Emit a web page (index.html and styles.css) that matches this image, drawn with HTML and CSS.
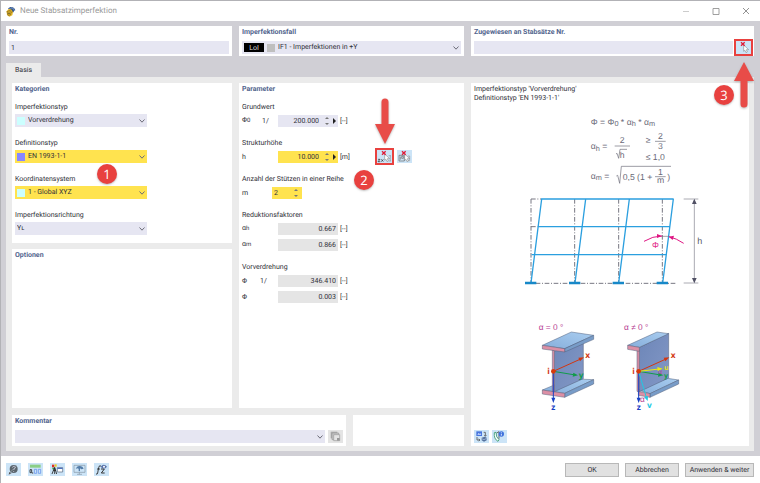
FILE: index.html
```html
<!DOCTYPE html>
<html lang="de">
<head>
<meta charset="utf-8">
<title>Neue Stabsatzimperfektion</title>
<link rel="stylesheet" href="styles.css">
</head>
<body>
<svg class="defs" aria-hidden="true">
  <defs>
    <symbol id="chevron" viewBox="0 0 8 8"><path d="M1.5 2.5 4 5.2 6.5 2.5" fill="none" stroke="#6c6c78" stroke-width="1"/></symbol>
    <symbol id="pick" viewBox="0 0 45 39">
      <path d="M23 12v19l4-3 3 7 4-2-3-7h7z" fill="#fff" stroke="#777" stroke-width="1.5"/>
      <path d="M15 4l11 10M26 4l-11 10" stroke="#e01a36" stroke-width="4"/>
    </symbol>
    <linearGradient id="web" x1="0" y1="0" x2="1" y2="1"><stop offset="0" stop-color="#6d86b8"/><stop offset="1" stop-color="#8398c6"/></linearGradient>
    <linearGradient id="top" x1="0" y1="1" x2="1" y2="0"><stop offset="0" stop-color="#86aedb"/><stop offset="1" stop-color="#a9cdf0"/></linearGradient>
  </defs>
</svg>
<div class="window">
  <header class="titlebar">
    <svg class="app-icon" viewBox="0 0 30 33" aria-hidden="true">
      <path d="M6 8C12 0 25 2 28 13l-5 2 1 4-6-1-4-7z" fill="#35568c"/>
      <path d="M9 6l8 2M15 4l8 6M21 6l5 9" stroke="#8fb0d8" stroke-width="1.5"/>
      <path d="M2 16l6-7 7 1 6 8-2 10-9 4-7-5z" fill="#e3b526"/>
      <path d="M3 17l7-3 5 5-2 8-7 1zM10 14l6-3M15 19l5-2" fill="none" stroke="#7b6220" stroke-width="1.8"/>
      <circle cx="9" cy="22" r="2.4" fill="#55502f"/>
    </svg>
    <h1>Neue Stabsatzimperfektion</h1>
    <div class="window-controls">
      <button type="button" aria-label="Minimieren"><svg viewBox="0 0 8 8"><path d="M1 4.5h6" stroke="#ccc"/></svg></button>
      <button type="button" aria-label="Maximieren"><svg viewBox="0 0 8 8"><path d="M1 1.5h6v6H1z" fill="none" stroke="#888" stroke-width=".8"/></svg></button>
      <button type="button" aria-label="Schließen"><svg viewBox="0 0 8 8"><path d="M1 1l6 6M7 1l-6 6" stroke="#777" stroke-width=".8"/></svg></button>
    </div>
  </header>

  <main class="content">
    <div class="head-row">
      <section class="panel">
        <h2><label for="nr">Nr.</label></h2>
        <div class="line"><input class="field grow" id="nr" value="1"></div>
      </section>
      <section class="panel">
        <h2><label for="case">Imperfektionsfall</label></h2>
        <div class="line">
          <div class="combo grow"><span class="tag">LoI</span><i class="swatch grey"></i><select id="case"><option>IF1 - Imperfektionen in +Y</option></select><svg class="chev"><use href="#chevron"/></svg></div>
        </div>
      </section>
      <section class="panel assigned">
        <h2><label for="sets">Zugewiesen an Stabsätze Nr.</label></h2>
        <div class="line">
          <input class="field grow" id="sets">
          <button class="tool marked" type="button" aria-label="Stabsätze wählen"><svg viewBox="0 0 45 39"><use href="#pick" width="45" height="39"/></svg></button>
        </div>
        <svg class="arrow up" viewBox="0 0 20 46" aria-hidden="true"><path d="M10 0 20 19h-6.500v23a3.500 3.500 0 0 1-7 0V19H0z"/></svg>
        <span class="badge three">3</span>
      </section>
    </div>

    <nav class="tabs"><button type="button" class="tab">Basis</button></nav>
    <div class="sheet">
      <div class="left">
        <div class="upper">
          <div class="stack">
            <section class="panel">
              <h2>Kategorien</h2>
              <div class="groups">
                <div class="group"><label for="typ">Imperfektionstyp</label>
                  <div class="combo"><i class="swatch cyan"></i><select id="typ"><option>Vorverdrehung</option></select><svg class="chev"><use href="#chevron"/></svg></div></div>
                <div class="group"><label for="def">Definitionstyp</label>
                  <div class="combo hot"><i class="swatch violet"></i><select id="def"><option>EN 1993-1-1</option></select><svg class="chev"><use href="#chevron"/></svg></div></div>
                <div class="group"><label for="cs">Koordinatensystem</label>
                  <div class="combo hot"><i class="swatch cyan"></i><select id="cs"><option>1 - Global XYZ</option></select><svg class="chev"><use href="#chevron"/></svg></div>
                  <span class="badge one">1</span></div>
                <div class="group"><label for="dir">Imperfektionsrichtung</label>
                  <div class="combo"><select id="dir"><option>Yʟ</option></select><svg class="chev"><use href="#chevron"/></svg></div></div>
              </div>
            </section>
            <section class="panel fill"><h2>Optionen</h2></section>
          </div>

          <section class="panel">
            <h2>Parameter</h2>
            <div class="groups">
              <div class="group"><h3>Grundwert</h3>
                <div class="param"><label for="phi0">Φ<small>0</small></label><span>1/</span>
                  <div class="number"><input id="phi0" value="200.000"><span class="spin"><button type="button" aria-label="Mehr"></button><button type="button" aria-label="Weniger"></button></span><button class="play" type="button" aria-label="Optionen"></button></div>
                  <span>[--]</span></div></div>
              <div class="group"><h3>Strukturhöhe</h3>
                <div class="param"><label for="h">h</label><span></span>
                  <div class="number hot"><input id="h" value="10.000"><span class="spin"><button type="button" aria-label="Mehr"></button><button type="button" aria-label="Weniger"></button></span><button class="play" type="button" aria-label="Optionen"></button></div>
                  <span>[m]</span>
                  <div class="tools">
                    <button class="tool marked" type="button" aria-label="Zwei Punkte wählen"><svg viewBox="0 0 45 39"><path d="M40 17v16M35 17h7M35 33h7" stroke="#8c98a4" stroke-width="2"/><path d="M3 28h6l-6 7h7M13 28l6 7M19 28l-6 7" fill="none" stroke="#222" stroke-width="2"/><use href="#pick" width="45" height="39"/></svg></button>
                    <button class="tool" type="button" aria-label="Objekt wählen"><svg viewBox="0 0 45 39"><path d="M6 16h16v17H6zM10 20v9M14 19h5v6h-5z" fill="none" stroke="#666" stroke-width="2"/><path d="M33 18h5v14h-5" fill="none" stroke="#999" stroke-width="2"/><use href="#pick" width="45" height="39"/></svg></button>
                  </div></div>
                <svg class="arrow down" viewBox="0 0 20 46" aria-hidden="true"><path d="M10 46 0 26h6.500V4a3.500 3.500 0 0 1 7 0v22H20z"/></svg></div>
              <div class="group"><h3>Anzahl der Stützen in einer Reihe</h3>
                <div class="param count"><label for="m">m</label>
                  <div class="number hot"><input id="m" value="2"><span class="spin"><button type="button" aria-label="Mehr"></button><button type="button" aria-label="Weniger"></button></span></div></div>
                <span class="badge two">2</span></div>
              <div class="group"><h3>Reduktionsfaktoren</h3>
                <div class="param"><label for="ah">α<small>h</small></label><span></span><input class="result" id="ah" value="0.667" readonly><span>[--]</span></div>
                <div class="param"><label for="am">α<small>m</small></label><span></span><input class="result" id="am" value="0.866" readonly><span>[--]</span></div></div>
              <div class="group"><h3>Vorverdrehung</h3>
                <div class="param"><label for="p1">Φ</label><span class="near">1/</span><input class="result" id="p1" value="346.410" readonly><span>[--]</span></div>
                <div class="param"><label for="p2">Φ</label><span></span><input class="result" id="p2" value="0.003" readonly><span>[--]</span></div></div>
            </div>
          </section>
        </div>

        <div class="lower">
          <section class="panel">
            <h2><label for="note">Kommentar</label></h2>
            <div class="line">
              <div class="combo grow"><select id="note"><option></option></select><svg class="chev"><use href="#chevron"/></svg></div>
              <button class="tool off" type="button" aria-label="Kommentare"><svg viewBox="0 0 45 39"><path d="M8 5h20v20H8z" fill="#aaa"/><path d="M12 9h20v20H12z" fill="#c8c8c8" stroke="#999" stroke-width="2"/><path d="M17 14h18v18H17z" fill="#e4e4e4" stroke="#999" stroke-width="2"/><path d="M27 24h8v8h-8z" fill="#999"/></svg></button>
            </div>
          </section>
          <section class="panel"></section>
        </div>
      </div>

      <section class="panel info">
        <p>Imperfektionstyp 'Vorverdrehung'<br>Definitionstyp 'EN 1993-1-1'</p>
        <div class="figures">
          <svg class="formula" viewBox="18 96 834 228">
            <g fill="#696977" font-size="26">
              <text x="377" y="134">Φ = Φ<tspan font-size="22" dy="5">0</tspan><tspan dy="-5"> * α</tspan><tspan font-size="22" dy="5">h</tspan><tspan dy="-5"> * α</tspan><tspan font-size="22" dy="5">m</tspan></text>
              <text x="377" y="208">α<tspan font-size="22" dy="5">h</tspan><tspan dy="-5"> =</tspan></text>
              <text x="464" y="190">2</text><text x="464" y="235">h</text>
              <text x="542" y="190">≥</text><text x="579" y="177">2</text><text x="579" y="207">3</text>
              <text x="542" y="239">≤ 1,0</text>
              <text x="377" y="296">α<tspan font-size="22" dy="5">m</tspan><tspan dy="-5"> =</tspan></text>
              <text x="473" y="299">0,5 (1 +</text><text x="579" y="284">1</text><text x="576" y="310">m</text><text x="607" y="299">)</text>
            </g>
            <path d="M449 198h46M570 184h32M453 222l3-2 5 15 4-27h21M570 290h32M454 288l4-2 6 24 5-51h149" fill="none" stroke="#696977" stroke-width="2"/>
          </svg>
          <svg class="frame" viewBox="-132 15 834 312">
            <g fill="none" stroke="#777782" stroke-width="3" stroke-dasharray="14 5 3 5"><path d="M48 42v252M179 42v252M311 42v252M442 42v252M35 295h450"/><path d="M48 42h30M48 125h20"/></g>
            <g fill="none" stroke="#2b9fdf" stroke-width="4"><path d="M78 42h398M69 125h395M50 209h403M80 42 48 294M212 42 180 294M343 42 311 294M475 42 443 294"/></g>
            <path d="M30 294h34M162 294h34M293 294h34M425 294h34" stroke="#1788c8" stroke-width="7"/>
            <path d="M506 42h44M506 294h44M538 45v245" stroke="#aaaab2" stroke-width="3"/>
            <path d="M538 41l7 16h-14zM538 295l7-16h-14z" fill="#505064"/>
            <path d="M387 169q26-16 54-16M462 155q22 5 44 20" fill="none" stroke="#df1683" stroke-width="3"/><path d="M440 154h22" stroke="#777782" stroke-width="2"/>
            <path d="M441 153l-15-6v12zM461 155l16-3-4 13z" fill="#df1683"/>
            <text x="411" y="188" font-size="26" fill="#df1683">Φ</text><text x="547" y="177" font-size="27" fill="#555563">h</text>
          </svg>
          <svg class="beams" viewBox="-147 24 834 288">
            <g stroke="#53617c" stroke-width="1.500" stroke-linejoin="round">
              <path d="M67 240l81-34 73 3-87 41z" fill="url(#top)"/><path d="M134 250l87-41v13l-87 40z" fill="#789cc8"/><path d="M67 240l67 10v12l-67-10z" fill="#dc8fa5"/>
              <path d="M103 124l87-40v122l-87 39z" fill="url(#web)"/><path d="M97 120h6v126l-6-2z" fill="#dc8fa5"/>
              <path d="M67 106l87-40 67 10-87 40z" fill="url(#top)"/><path d="M134 116l87-40v12l-87 38z" fill="#789cc8"/><path d="M67 106l67 10v10l-67-9z" fill="#dc8fa5"/>
              <path d="M355 240l88-35 33 5-86 41z" fill="url(#top)"/><path d="M390 251l86-41v12l-86 40z" fill="#789cc8"/><path d="M355 244l35 7v11l-35-6z" fill="#dc8fa5"/>
              <path d="M358 112l88-42v134l-88 41z" fill="url(#web)"/><path d="M351 120h7v126l-7-2z" fill="#dc8fa5"/>
              <path d="M323 106l88-40 35 5-88 41z" fill="url(#top)"/><path d="M323 106l35 6v12l-35-6z" fill="#dc8fa5"/>
            </g>
            <g fill="none" stroke-width="3">
              <path d="M100 184v80M356 184v80" stroke="#1740c4"/><path d="M100 184l60 10M356 184l60 10" stroke="#119b4a"/>
              <path d="M100 184l82-37M356 184l82-37" stroke="#d23610"/><path d="M356 184l62-7" stroke="#eceb12"/><path d="M356 184l23 78" stroke="#20c9e3"/>
            </g>
            <path d="M100 279l-6-16h12zM356 279l-6-16h12z" fill="#1740c4"/><path d="M174 196l-16 4 2-12zM430 196l-16 4 2-12z" fill="#119b4a"/><path d="M192 142l-12 12-5-11zM448 142l-12 12-5-11z" fill="#d23610"/><path d="M428 176l-15 7-1-12z" fill="#eceb12"/><path d="M383 273l-11-12 12-3z" fill="#20c9e3"/>
            <circle cx="100" cy="184" r="7" fill="#d83a0a"/><circle cx="356" cy="184" r="7" fill="#d83a0a"/>
            <g font-size="25">
              <g fill="#b53c92"><text x="56" y="60">α = 0 °</text><text x="312" y="60">α ≠ 0 °</text><text x="415" y="191" font-size="20">α</text><text x="360" y="276">α</text></g>
              <g class="axis-names"><text x="196" y="145" fill="#d23610">x</text><text x="452" y="145" fill="#d23610">x</text><text x="176" y="203" fill="#119b4a">y</text><text x="432" y="204" font-size="21" fill="#119b4a">y</text><text x="432" y="179" font-size="21" fill="#e2e01c">u</text><text x="94" y="300" fill="#1740c4">z</text><text x="350" y="300" fill="#1740c4">z</text><text x="381" y="295" fill="#20c9e3">v</text><text x="82" y="193" fill="#d23610">i</text><text x="337" y="193" fill="#d23610">i</text></g>
            </g>
          </svg>
        </div>
        <div class="info-tools">
          <button class="tool" type="button" aria-label="Bild wechseln"><svg viewBox="0 0 45 39"><path d="M7 4h17v14H7z" fill="#4775dd"/><path d="M10 14l4-5 3 3 2-2 3 4z" fill="#d7e5ff"/><path d="M29 7h5v10M9 21v9h8M31 15l3 4 3-4M14 27l4 3-4 3" fill="none" stroke="#555" stroke-width="2.500"/><path d="M23 23l9-3 6 3v8l-8 4-7-4z" fill="#53709d"/><path d="M23 26l7 3 8-4" fill="none" stroke="#b7cbe6" stroke-width="2"/></svg></button>
          <button class="tool" type="button" aria-label="Ansicht mit Info"><svg viewBox="0 0 45 39"><path d="M7 8q-2 19 11 26l3-5Q11 21 12 7z" fill="#fff" stroke="#31976a" stroke-width="2.500"/><path d="M14 9l7-4v21" fill="none" stroke="#555" stroke-width="2.500"/><circle cx="28" cy="12" r="8" fill="#3f72dc"/><path d="M28 11v6M28 7v2" stroke="#fff" stroke-width="2.500"/></svg></button>
        </div>
      </section>
    </div>
  </main>

  <footer class="footer">
    <div class="foot-tools">
      <button class="tool" type="button" aria-label="Hilfe"><svg viewBox="0 0 45 39"><path d="M10 27l-2 8 9-5z" fill="#555"/><circle cx="23" cy="18" r="12" fill="#5c666e"/><path d="M14 26l18-17" stroke="#8e999f" stroke-width="3"/><path d="M19 14q1-5 6-4 5 2 2 6-4 2-4 5M23 24v3" fill="none" stroke="#dde" stroke-width="2"/></svg></button>
      <button class="tool" type="button" aria-label="Einheiten"><svg viewBox="0 0 45 39"><path d="M6 5h32v9H6z" fill="#8bcf87"/><path d="M6 20h5v9H6zM14 28v4" fill="none" stroke="#222" stroke-width="2.500"/><path d="M19 19h7v12h-7zM31 19h7v12h-7z" fill="none" stroke="#6c98ea" stroke-width="2.500"/></svg></button>
      <button class="tool" type="button" aria-label="Anzeige"><svg viewBox="0 0 45 39"><path d="M6 5h7v8H6z" fill="#df2e29"/><path d="M14 4h6v7h-6z" fill="#eacb23"/><path d="M7 14h6v5H7z" fill="#3ca85b"/><path d="M14 13l-8 20M14 13l6 20M10 22h8M14 15v18" stroke="#222" stroke-width="2.500"/><path d="M22 14h16v13H22z" fill="#fff" stroke="#52627a" stroke-width="2"/><path d="M22 14h16v4H22z" fill="#4f73bf"/></svg></button>
      <button class="tool" type="button" aria-label="Grafik"><svg viewBox="0 0 45 39"><path d="M6 7h33v21H6zM22 28v6M15 34h15" fill="none" stroke="#8394a3" stroke-width="2"/><path d="M11 19q3-11 13-10 9 1 11 8l-7 2-4-3v9l-4-1v-7l-5-1z" fill="#537ca8"/></svg></button>
      <button class="tool" type="button" aria-label="Formel"><svg viewBox="0 0 45 39"><path d="M21 9q-6-3-7 5l-3 16q-1 5-5 3M9 18h9" fill="none" stroke="#222" stroke-width="2.500"/><path d="M21 18h10L22 30h10" fill="none" stroke="#333" stroke-width="3"/><path d="M20 11q9-12 19 0-9 11-19 0z" fill="#5771a9"/><circle cx="30" cy="11" r="3" fill="#fff"/></svg></button>
    </div>
    <div class="actions">
      <button type="button">OK</button><button type="button">Abbrechen</button><button type="button" class="wide">Anwenden &amp; weiter</button>
    </div>
  </footer>
</div>
</body>
</html>
```
FILE: styles.css
```css
* { box-sizing: border-box; }
body { margin: 0; font: 7px/12px Roboto, "Noto Sans", sans-serif; color: #2f2f38; background: #fff; text-rendering: geometricPrecision; }
button, input, select { font: inherit; color: inherit; text-rendering: inherit; border: 0; padding: 0; margin: 0; min-width: 0; background: transparent; appearance: none; border-radius: 0; }
h1, h2, h3, p { margin: 0; font: inherit; }
svg { display: block; }
small { font-size: 6px; }
.defs { position: absolute; width: 0; height: 0; }

.window { min-height: 100vh; display: flex; flex-direction: column; border: solid #b2b2b6; border-width: 1px 0 0 1px; }
.titlebar { display: flex; align-items: center; height: 20px; padding: 0 10px 0 5px; gap: 4px; }
.titlebar h1 { font-size: 8px; color: #999; flex: 1; }
.app-icon { width: 10px; height: 11px; }
.window-controls { display: flex; gap: 22px; }
.window-controls svg { width: 8px; height: 8px; }

.content { flex: 1; display: flex; flex-direction: column; background: #d0cfd5; padding: 5px 6px 5px 5px; }
.head-row { display: grid; grid-template-columns: 226fr 225fr 283fr; gap: 7px; }
.panel { position: relative; background: #fff; padding: 0 3px; }
.panel h2 { font-weight: 700; color: #52658e; }
.head-row .panel { padding-bottom: 2px; }
.line { display: flex; gap: 3px; margin-top: 3px; }
.grow { flex: 1; }
.field, .combo, .number { background: #e6e6f2; height: 13px; }
.field { padding: 0 2px; width: 100%; }
.combo { position: relative; display: flex; align-items: center; gap: 3px; padding: 0 2px; }
.combo select { flex: 1; height: 13px; line-height: 13px; padding-right: 10px; }
.number.hot, .hot { background: #ffe34f; }
.chev { position: absolute; right: 1px; top: 3px; width: 8px; height: 8px; pointer-events: none; }
.swatch { width: 8px; height: 8px; }
.grey { background: #bfbfbf; }
.cyan { background: #ccffff; }
.violet { background: #8787ff; }
.tag { width: 20px; height: 9px; line-height: 10px; text-align: center; background: #000; color: #d8d8d8; }
.tool { display: block; width: 15px; height: 13px; background: #cce4f7; flex: none; }
.tool svg { width: 15px; height: 13px; }
.marked { outline: 2px solid #e8413f; }
.off { background: #e4e4e4; }

.tabs { display: flex; margin-top: 7px; }
.tab { background: #ebebeb; height: 14px; padding: 0 9px; }
.sheet { flex: 1; display: grid; grid-template-columns: 452fr 278fr; gap: 7px; background: #ebebeb; padding: 6px 5px 5px 6px; }
.left { display: flex; flex-direction: column; gap: 7px; }
.upper { flex: 1; display: grid; grid-template-columns: 220fr 225fr; gap: 7px; }
.stack { display: flex; flex-direction: column; gap: 6px; }
.fill { flex: 1; }
.lower { display: grid; grid-template-columns: 334fr 111fr; gap: 7px; }
.lower .panel { padding-bottom: 3px; }

.groups { display: flex; flex-direction: column; gap: 10px; padding: 6px 0 8px; }
.group { position: relative; display: flex; flex-direction: column; }
.group > label { margin-bottom: 1px; }
.group .combo { width: 132px; }
.group h3 { margin-bottom: 1px; }
.param { display: grid; grid-template-columns: 18px 18px 60px 32px auto; align-items: center; justify-content: start; height: 13px; }
.param > span { padding-left: 2px; }
.param > .near { padding-left: 0; }
.param + .param { margin-top: 3px; }
.count { grid-template-columns: 30px 30px; }
.number { display: flex; align-items: center; height: 12px; }
.number input { flex: 1; width: 20px; text-align: right; }
.count .number input { text-align: left; padding-left: 2px; }
.spin { display: flex; flex-direction: column; gap: 4px; width: 5px; margin: 0 3px 0 6px; }
.spin button { height: 2px; border: solid transparent; border-width: 0 2px 2px; border-bottom-color: #777; width: 4px; }
.spin button + button { border-width: 2px 2px 0; border-top-color: #777; }
.play { width: 3px; height: 6px; margin-right: 2px; border: solid transparent; border-width: 3px 0 3px 3px; border-left-color: #222; }
.result { width: 60px; height: 12px; background: #e5e5e5; text-align: right; padding-right: 2px; }
.tools { display: flex; gap: 5px; padding-left: 7px; }

.badge { position: absolute; width: 20px; height: 20px; border-radius: 50%; background: #e8413f; color: #fff; font: 13px/20px "Open Sans", sans-serif; text-align: center; box-shadow: 0 1px 2px #8888; }
.one { left: 82px; top: -9px; }
.two { left: 112px; top: -3px; }
.three { right: 20px; top: 59px; z-index: 2; }
.arrow { position: absolute; width: 20px; height: 46px; fill: #e84c48; filter: drop-shadow(0 1px 1px #8889); z-index: 2; }
.arrow.up { right: 0; top: 36px; }
.arrow.down { left: 133px; top: -39px; }

.info { display: flex; flex-direction: column; padding: 2px 0 3px; }
.info p { padding: 0 3px; line-height: 9px; }
.figures { flex: 1; margin-top: 9px; font-family: "Liberation Sans", sans-serif; }
.figures svg { width: 100%; height: auto; }
.frame { margin-top: 2px; }
.beams { margin-top: 24px; }
.axis-names { font-family: "Open Sans", sans-serif; font-weight: bold; }
.info-tools { display: flex; gap: 3px; padding-left: 3px; }

.footer { display: flex; align-items: center; justify-content: space-between; height: 27px; padding: 0 6px 0 5px; }
.foot-tools { display: flex; gap: 7px; }
.actions { display: flex; gap: 6px; }
.actions button { width: 54px; height: 14px; line-height: 12px; background: #e1e1e1; border: 1px solid #b8b8b8; white-space: nowrap; }
.actions .wide { width: 69px; }
```
